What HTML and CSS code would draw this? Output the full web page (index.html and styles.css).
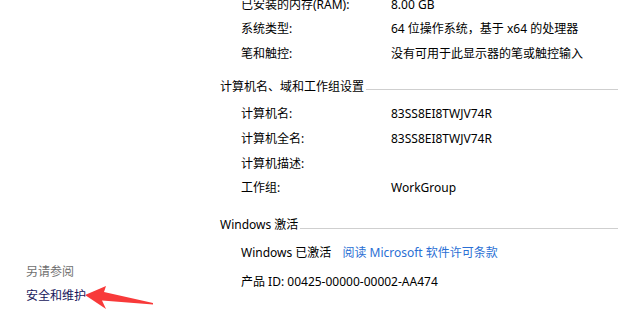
FILE: index.html
```html
<!DOCTYPE html>
<html lang="zh-CN">
<head>
  <meta charset="UTF-8" />
  <title>系统</title>
  <link rel="stylesheet" href="styles.css">
</head>
<body>
  <div class="sidebar">
    <div class="see-also">另请参阅</div>
    <div class="side-link">安全和维护</div>
  </div>

  <div class="main">
    <div class="rows">
      <div class="row"><span class="label">已安装的内存(RAM):</span><span class="value">8.00 GB</span></div>
      <div class="row"><span class="label">系统类型:</span><span class="value">64 位操作系统，基于 x64 的处理器</span></div>
      <div class="row"><span class="label">笔和触控:</span><span class="value">没有可用于此显示器的笔或触控输入</span></div>
    </div>

    <div class="section">
      <div class="section-title"><span>计算机名、域和工作组设置</span><div class="rule"></div></div>
      <div class="rows">
        <div class="row"><span class="label">计算机名:</span><span class="value">83SS8EI8TWJV74R</span></div>
        <div class="row"><span class="label">计算机全名:</span><span class="value">83SS8EI8TWJV74R</span></div>
        <div class="row"><span class="label">计算机描述:</span><span class="value"></span></div>
        <div class="row"><span class="label">工作组:</span><span class="value">WorkGroup</span></div>
      </div>
    </div>

    <div class="section activation">
      <div class="section-title"><span>Windows 激活</span><div class="rule"></div></div>
      <div class="rows">
        <div class="row">Windows 已激活<a class="link">阅读 Microsoft 软件许可条款</a></div>
        <div class="row product">产品 ID: 00425-00000-00002-AA474</div>
      </div>
    </div>
  </div>

  <!-- annotation arrow on top of the page -->
  <svg class="arrow" width="80" height="30" viewBox="80 284 80 30">
    <polygon points="85,295 106,286 104,292 153,303 153,304.5 102,300.5 106,309" fill="#f83a3a"/>
  </svg>
</body>
</html>
```

FILE: styles.css
```css
body {
  margin: 0;
  width: 618px;
  height: 320px;
  overflow: hidden;
  background: #fff;
  color: #000;
  font-family: "Noto Sans", "Noto Sans CJK SC", sans-serif;
  font-size: 12px;
  display: flex;
  position: relative;
}
.sidebar {
  width: 194px;
  padding-left: 26px;
  display: flex;
  flex-direction: column;
  justify-content: flex-end;
  padding-bottom: 11px;
}
.see-also, .side-link {
  height: 24.7px;
  line-height: 24.7px;
}
.see-also {
  color: #707070;
}
.side-link {
  color: #16165c;
}
.main {
  flex: 1;
  margin-top: -7.3px;
}
.row {
  display: flex;
  height: 24.7px;
  line-height: 24.7px;
  padding-left: 21px;
  white-space: nowrap;
}
.label {
  width: 150px;
}
.section {
  margin-top: 10px;
}
.section.activation {
  margin-top: 14px;
}
.section-title {
  display: flex;
  align-items: center;
  height: 20px;
  line-height: 20px;
  margin-bottom: 5.6px;
}
.rule {
  flex: 1;
  height: 1px;
  background: #cfcfcf;
  margin-top: 6px;
  margin-left: 2px;
}
.link {
  color: #2a6fd4;
  margin-left: 11px;
  cursor: pointer;
}
.row.product {
  margin-top: 5px;
}
.arrow {
  position: absolute;
  left: 80px;
  top: 284px;
}
```
